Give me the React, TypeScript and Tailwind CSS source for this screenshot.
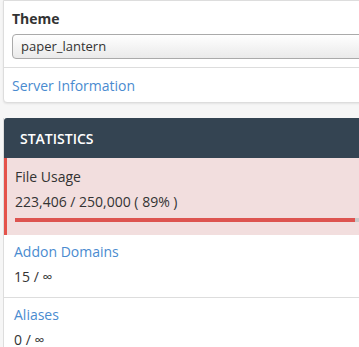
import React from 'react';

const StatRow = ({ label, value, last }: { label: string; value: string; last?: boolean }) => (
    <div className={`pl-[10px] pt-[7px] ${last ? 'pb-2' : 'pb-[10px] border-b border-[#ddd]'}`}>
        <a href="#" className="block text-[14px] leading-5 text-[#4a8bd0]">{label}</a>
        <div className="mt-[5px] text-[14px] leading-5 text-[#333]">{value}</div>
    </div>
);

export default function App() {
    const used = 223406;
    const total = 250000;
    const pct = Math.round((used / total) * 100);

    return (
        <div className="w-[359px] h-[347px] overflow-hidden bg-[#f6f6f6] font-['Open_Sans',sans-serif]">
            <div className="w-[410px] pl-[3px]">
                {/* General info panel */}
                <div className="bg-white border border-[#ddd] rounded-b-[4px] shadow-[0_1px_2px_rgba(0,0,0,0.08)]">
                    <div className="px-2 pt-2 pb-2 border-b border-[#ddd]">
                        <div className="text-[14px] leading-5 font-bold text-[#333]">Theme</div>
                        <div className="mt-[5px] h-[25px] flex items-center pl-2 border border-[#aaa] rounded-[4px] bg-gradient-to-b from-white to-[#eaeaea] text-[13px] text-[#333]">
                            paper_lantern
                        </div>
                    </div>
                    <div className="px-2 pt-2 pb-[6px]">
                        <a href="#" className="block text-[14px] leading-5 text-[#4a8bd0]">Server Information</a>
                    </div>
                </div>

                {/* Statistics panel */}
                <div className="mt-[15px] bg-white border-l border-[#ddd]">
                    <div className="h-10 flex items-center pl-4 bg-[#344452] rounded-tl-[3px] text-white text-[14px] font-semibold uppercase">
                        Statistics
                    </div>
                    <div className="bg-[#f2dede] border-l-[3px] border-[#e4534b] pl-2 pt-[9px] pb-[13px] pr-[14px]">
                        <div className="text-[14px] leading-5 text-[#333]">File Usage</div>
                        <div className="mt-[5px] text-[14px] leading-5 text-[#333]">
                            {used.toLocaleString('en-US')} / {total.toLocaleString('en-US')} ( {pct}% )
                        </div>
                        <div className="mt-[6px] h-1 bg-[#c9c9c9]">
                            <div className="h-1 bg-[#dd5450]" style={{ width: `${(used / total) * 100}%` }} />
                        </div>
                    </div>
                    <StatRow label="Addon Domains" value="15 / ∞" />
                    <StatRow label="Aliases" value="0 / ∞" last />
                </div>
            </div>
        </div>
    );
}
